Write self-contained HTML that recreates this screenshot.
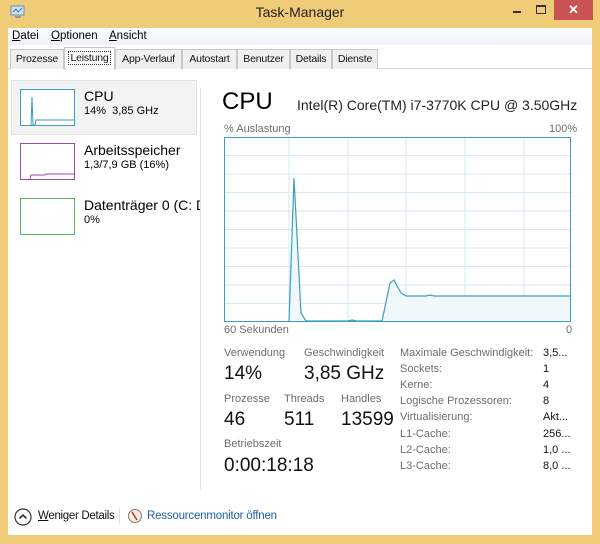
<!DOCTYPE html>
<html><head><meta charset="utf-8"><style>
*{margin:0;padding:0;box-sizing:border-box}
body{width:600px;height:544px;background:#f0cb78;font-family:"Liberation Sans",sans-serif;position:relative;overflow:hidden;color:#000}
.abs{position:absolute}
.title{left:0;top:4px;width:600px;text-align:center;font-size:14px;color:#222}
.close{left:554px;top:0;width:39px;height:20px;background:#c95252;color:#fff;text-align:center;font-size:13px;line-height:20px;font-weight:bold}
.client{left:8px;top:28px;width:584px;height:507px;background:#fff}
.menu{left:0;top:0;width:584px;height:17px;background:linear-gradient(#fbfcfe,#eef2f8);font-size:11.5px}
.menu span{position:absolute;top:2px}
.tabs{left:0;top:18px;width:584px;height:23px;background:#fff;border-bottom:1px solid #d9d9d9}
.tab{position:absolute;top:3px;height:20px;background:#f0f0f0;border:1px solid #c8c8c8;border-bottom:none;font-size:10.5px;letter-spacing:-0.2px;line-height:18px;text-align:center;color:#111;white-space:nowrap}
.tab.sel{top:1px;height:23px;background:#fff;line-height:20px}
.tab.sel span{border:1px dotted #333;padding:0 1px}
.lbl{font-size:11px;color:#6d6d6d}
.big{font-size:19px;color:#111}
.r{font-size:11px;color:#6d6d6d}
.rv{font-size:11px;color:#111}
</style></head><body>
<svg class="abs" style="left:10px;top:5px" width="16" height="14"><rect x="1" y="1" width="13" height="9" fill="#cfe3f2" stroke="#6a8fb0"/><polyline points="3,7 6,4 8,7 12,3" fill="none" stroke="#3a79b5"/><rect x="5" y="11" width="6" height="2" fill="#999"/></svg>
<div class="abs title">Task-Manager</div>
<div class="abs" style="left:513px;top:11px;width:8px;height:2px;background:#333"></div>
<div class="abs" style="left:536px;top:5px;width:10px;height:9px;border:1px solid #333;border-top:2px solid #333"></div>
<div class="abs close">✕</div>
<div class="abs client">
 <div class="abs menu"><span style="left:4px"><u>D</u>atei</span><span style="left:43px"><u>O</u>ptionen</span><span style="left:101px"><u>A</u>nsicht</span></div>
 <div class="abs tabs">
  <div class="tab" style="left:2px;width:54px">Prozesse</div>
  <div class="tab sel" style="left:56px;width:51px"><span>Leistung</span></div>
  <div class="tab" style="left:107px;width:67px">App-Verlauf</div>
  <div class="tab" style="left:174px;width:55px">Autostart</div>
  <div class="tab" style="left:229px;width:53px">Benutzer</div>
  <div class="tab" style="left:282px;width:42px">Details</div>
  <div class="tab" style="left:324px;width:46px">Dienste</div>
 </div>
</div>
<!-- left panel -->
<div class="abs" style="left:11px;top:80px;width:186px;height:55px;background:#f3f3f3;border:1px solid #e2e2e2"></div>
<div class="abs" style="left:200px;top:88px;width:1px;height:402px;background:#e0e0e0"></div>
<svg class="abs" style="left:20px;top:89px" width="56" height="38"><rect x="0.5" y="0.5" width="54" height="36" fill="#fff" stroke="#3a9ec0"/><polyline points="11,36 12,8 13,36 15,36 16,31 18,31 54,31" fill="none" stroke="#3a9ec0"/></svg>
<div class="abs" style="left:84px;top:88px;font-size:14px">CPU</div>
<div class="abs" style="left:84px;top:105px;font-size:11px">14%&nbsp; 3,85 GHz</div>
<svg class="abs" style="left:20px;top:143px" width="56" height="38"><rect x="0.5" y="0.5" width="54" height="36" fill="#fff" stroke="#9a4aa8"/><polyline points="10,36 11,32 25,32 26,31 54,31" fill="none" stroke="#9a4aa8"/></svg>
<div class="abs" style="left:84px;top:142px;font-size:14px">Arbeitsspeicher</div>
<div class="abs" style="left:84px;top:159px;font-size:11px">1,3/7,9 GB (16%)</div>
<svg class="abs" style="left:20px;top:198px" width="56" height="38"><rect x="0.5" y="0.5" width="54" height="36" fill="#fff" stroke="#5db55d"/></svg>
<div class="abs" style="left:84px;top:197px;font-size:14px;width:116px;white-space:nowrap;overflow:hidden">Datenträger 0 (C: D</div>
<div class="abs" style="left:84px;top:214px;font-size:11px">0%</div>
<!-- main -->
<div class="abs" style="left:222px;top:88px;font-size:24px;color:#000">CPU</div>
<div class="abs" style="left:297px;top:97px;font-size:14px;color:#222">Intel(R) Core(TM) i7-3770K CPU @ 3.50GHz</div>
<div class="abs lbl" style="left:224px;top:123px">% Auslastung</div>
<div class="abs lbl" style="left:549px;top:123px">100%</div>
<svg class="abs" style="left:224px;top:137px" width="348" height="186">
<g stroke="#d6eaf2" stroke-width="1">
<line x1="65" y1="0" x2="65" y2="185"/><line x1="124" y1="0" x2="124" y2="185"/><line x1="182" y1="0" x2="182" y2="185"/><line x1="241" y1="0" x2="241" y2="185"/><line x1="300" y1="0" x2="300" y2="185"/>
<line x1="0" y1="18.5" x2="347" y2="18.5"/><line x1="0" y1="37" x2="347" y2="37"/><line x1="0" y1="55.5" x2="347" y2="55.5"/><line x1="0" y1="74" x2="347" y2="74"/><line x1="0" y1="92.5" x2="347" y2="92.5"/><line x1="0" y1="111" x2="347" y2="111"/><line x1="0" y1="129.5" x2="347" y2="129.5"/><line x1="0" y1="148" x2="347" y2="148"/><line x1="0" y1="166.5" x2="347" y2="166.5"/>
</g>
<polygon points="65,185 70,41 77,176 82,184 158,184 166,146 170,143 177,156 182,159 202,159 206,158 210,159 347,159 347,185" fill="#f1f8fb"/>
<polyline points="65,185 70,41 77,176 82,184 124,184 128,183 132,184 158,184 166,146 170,143 177,156 182,159 202,159 206,158 210,159 347,159" fill="none" stroke="#3a9ec0" stroke-width="1.2"/>
<rect x="0.5" y="0.5" width="346" height="184" fill="none" stroke="#3a9ec0"/>
</svg>
<div class="abs lbl" style="left:224px;top:324px">60 Sekunden</div>
<div class="abs lbl" style="left:566px;top:324px">0</div>
<div class="abs lbl" style="left:224px;top:347px">Verwendung</div>
<div class="abs lbl" style="left:304px;top:347px">Geschwindigkeit</div>
<div class="abs big" style="left:224px;top:363px">14%</div>
<div class="abs big" style="left:304px;top:363px">3,85 GHz</div>
<div class="abs lbl" style="left:224px;top:393px">Prozesse</div>
<div class="abs lbl" style="left:284px;top:393px">Threads</div>
<div class="abs lbl" style="left:341px;top:393px">Handles</div>
<div class="abs big" style="left:224px;top:409px">46</div>
<div class="abs big" style="left:284px;top:409px">511</div>
<div class="abs big" style="left:341px;top:409px">13599</div>
<div class="abs lbl" style="left:224px;top:438px">Betriebszeit</div>
<div class="abs big" style="left:224px;top:455px">0:00:18:18</div>
<div class="abs r" style="left:400px;top:347px">Maximale Geschwindigkeit:</div><div class="abs rv" style="left:543px;top:347px">3,5...</div>
<div class="abs r" style="left:400px;top:363px">Sockets:</div><div class="abs rv" style="left:543px;top:363px">1</div>
<div class="abs r" style="left:400px;top:379px">Kerne:</div><div class="abs rv" style="left:543px;top:379px">4</div>
<div class="abs r" style="left:400px;top:395px">Logische Prozessoren:</div><div class="abs rv" style="left:543px;top:395px">8</div>
<div class="abs r" style="left:400px;top:411px">Virtualisierung:</div><div class="abs rv" style="left:543px;top:411px">Akt...</div>
<div class="abs r" style="left:400px;top:428px">L1-Cache:</div><div class="abs rv" style="left:543px;top:428px">256...</div>
<div class="abs r" style="left:400px;top:444px">L2-Cache:</div><div class="abs rv" style="left:543px;top:444px">1,0 ...</div>
<div class="abs r" style="left:400px;top:460px">L3-Cache:</div><div class="abs rv" style="left:543px;top:460px">8,0 ...</div>
<!-- footer -->
<svg class="abs" style="left:13px;top:507px" width="20" height="20"><circle cx="10" cy="10" r="8" fill="#fff" stroke="#333" stroke-width="1.2"/><polyline points="6.5,11.5 10,8 13.5,11.5" fill="none" stroke="#333" stroke-width="1.6"/></svg>
<div class="abs" style="left:38px;top:510px;font-size:11.5px;letter-spacing:-0.3px;color:#111"><u>W</u>eniger Details</div>
<div class="abs" style="left:119px;top:508px;width:1px;height:16px;background:#ddd"></div>
<svg class="abs" style="left:127px;top:508px" width="16" height="16"><circle cx="8" cy="8" r="6.5" fill="#f4eee6" stroke="#8a7a6a"/><line x1="5" y1="4" x2="10" y2="12" stroke="#c0392b" stroke-width="1.6"/></svg>
<div class="abs" style="left:147px;top:510px;font-size:11.5px;letter-spacing:-0.2px;color:#1f5fa8">Ressourcenmonitor öffnen</div>
</body></html>
